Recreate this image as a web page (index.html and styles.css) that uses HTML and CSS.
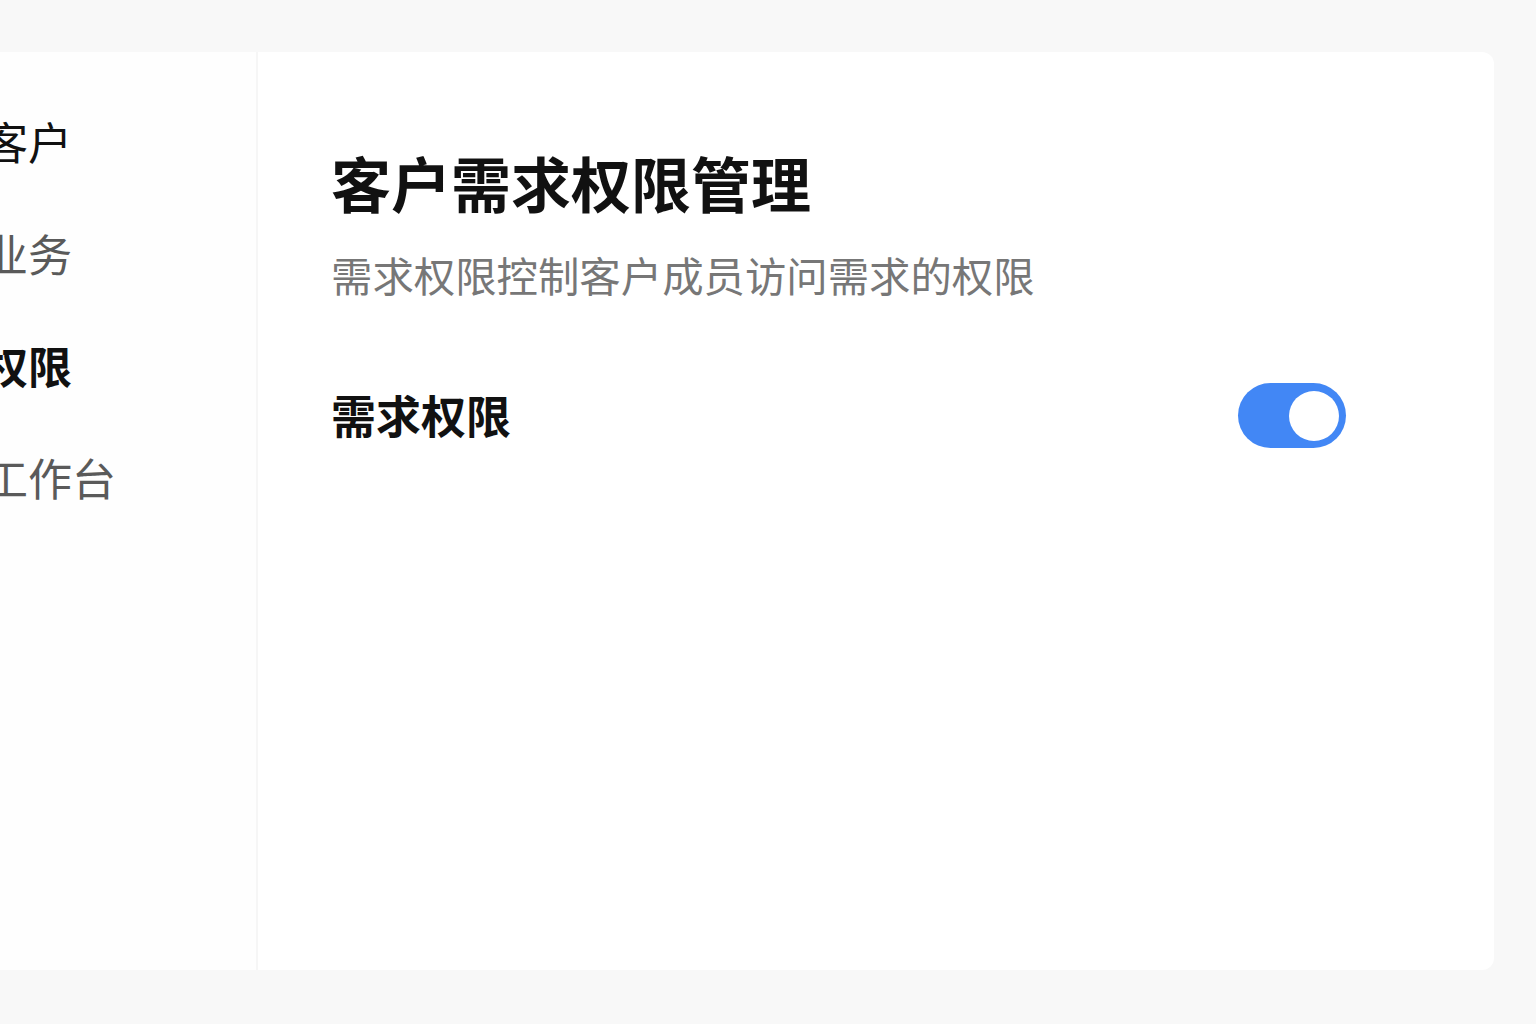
FILE: index.html
```html
<!DOCTYPE html>
<html>
<head>
    <meta charset="UTF-8">
    <title>客户需求权限管理</title>
    <link rel="stylesheet" href="styles.css">
</head>
<body>
    <div class="page">
        <div class="card">
            <!-- left menu, partly scrolled out of view -->
            <ul class="menu">
                <li class="menu-item dark">客户</li>
                <li class="menu-item">业务</li>
                <li class="menu-item active">权限</li>
                <li class="menu-item">工作台</li>
            </ul>
            <div class="content">
                <h1 class="title">客户需求权限管理</h1>
                <p class="desc">需求权限控制客户成员访问需求的权限</p>
                <div class="setting-row">
                    <span class="setting-label">需求权限</span>
                    <span class="switch on"><span class="knob"></span></span>
                </div>
            </div>
        </div>
    </div>
</body>
</html>
```

FILE: styles.css
```css
html, body {
    margin: 0;
    padding: 0;
    background-color: #f8f8f8;
    font-family: "Noto Sans CJK SC", "Noto Sans", sans-serif;
    overflow: hidden;
}
.page {
    padding: 52px 42px 54px 0;
}
.card {
    display: flex;
    height: 918px;
    margin-left: -60px;
    background-color: #fff;
    border-radius: 0 12px 12px 0;
}
.menu {
    width: 318px;
    margin: 0;
    padding: 33px 0 0 44px;
    box-sizing: border-box;
    list-style: none;
    background-color: #fefefe;
    border-right: 2px solid #f6f6f6;
}
.menu-item {
    height: 112px;
    line-height: 112px;
    font-size: 44px;
    color: #5a5a5a;
    white-space: nowrap;
}
.menu-item.dark {
    color: #111;
}
.menu-item.active {
    color: #111;
    font-weight: bold;
}
.content {
    flex: 1;
    padding: 94px 148px 0 73px;
}
.title {
    margin: 0;
    font-size: 60px;
    line-height: 72px;
    font-weight: bold;
    color: #111;
}
.desc {
    margin: 28px 0 0 0;
    font-size: 41.4px;
    line-height: 57px;
    color: #777;
}
.setting-row {
    display: flex;
    align-items: center;
    justify-content: space-between;
    margin-top: 80px;
    height: 65px;
}
.setting-label {
    font-size: 45px;
    font-weight: bold;
    color: #111;
    margin-top: -2px;
}
.switch {
    display: flex;
    align-items: center;
    width: 108px;
    height: 65px;
    padding: 0 7px;
    box-sizing: border-box;
    border-radius: 33px;
    background-color: #ddd;
}
.switch.on {
    justify-content: flex-end;
    background-color: #4287f5;
}
.knob {
    width: 50px;
    height: 50px;
    border-radius: 50%;
    background-color: #fff;
}
```
